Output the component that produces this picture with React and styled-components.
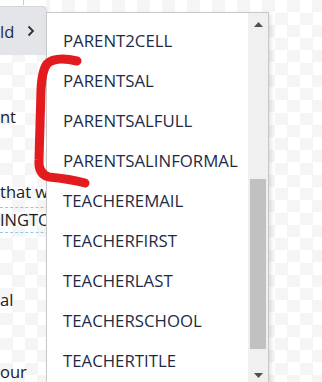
import React from "react";
import styled, { createGlobalStyle } from "styled-components";

const GlobalStyle = createGlobalStyle`
  html, body { margin: 0; padding: 0; }
  body { font-family: "Open Sans", "Noto Sans", sans-serif; }
`;

const Stage = styled.div`
  position: relative;
  width: 322px;
  height: 382px;
  overflow: hidden;
  background-color: #ffffff;
  background-image: conic-gradient(#f5f5f5 25%, transparent 0 50%, #f5f5f5 0 75%, transparent 0);
  background-size: 25px 25px;
`;

const LeftPane = styled.div`
  display: flex;
  flex-direction: column;
  width: 140px;
`;

const TopStrip = styled.div`
  height: 6px;
  width: 46px;
  background: #ffffff;
  display: flex;
`;

const Tick = styled.div`
  margin-left: 23px;
  width: 1px;
  height: 5px;
  background: #c9c9c9;
`;

const SubmenuItem = styled.div`
  box-sizing: border-box;
  width: 47px;
  height: 49px;
  background: #e3e5e8;
  border-top: 1px solid #d3d5d8;
  border-right: 1px solid #d3d5d8;
  border-top-right-radius: 5px;
  display: flex;
  align-items: center;
  gap: 13px;
  font-size: 16.5px;
  color: #1e2a45;
`;

const DocLine = styled.div`
  margin-top: ${(p) => p.$gap}px;
  height: 20px;
  line-height: 20px;
  font-size: 16.5px;
  color: #1c1c1c;
  white-space: nowrap;
`;

const FieldBox = styled.div`
  margin-top: ${(p) => p.$gap}px;
  box-sizing: border-box;
  height: 26px;
  border-top: 1px dashed #8ec9ea;
  border-bottom: 1px dashed #8ec9ea;
  line-height: 24px;
  font-size: 16.5px;
  color: #1c1c1c;
  white-space: nowrap;
`;

const Dropdown = styled.div`
  position: absolute;
  left: 46px;
  top: 12px;
  width: 223px;
  height: 375px;
  box-sizing: border-box;
  background: #ffffff;
  border: 1px solid #c8c8c8;
  box-shadow: 2px 2px 4px rgba(0, 0, 0, 0.12);
  display: flex;
`;

const ItemList = styled.ul`
  list-style: none;
  margin: 0;
  padding: 8px 0 0 0;
  flex: 1;
  overflow: hidden;
`;

const Item = styled.li`
  height: 40px;
  line-height: 40px;
  padding-left: 16px;
  font-size: 16.8px;
  color: #1e2a45;
  white-space: nowrap;
`;

const Scrollbar = styled.div`
  width: 20px;
  background: #f0f0f0;
  display: flex;
  flex-direction: column;
  align-items: center;
`;

const ArrowButton = styled.div`
  height: 22px;
  width: 20px;
  display: flex;
  align-items: center;
  justify-content: center;
`;

const Track = styled.div`
  flex: 1;
  width: 100%;
  display: flex;
  flex-direction: column;
  align-items: center;
`;

const Thumb = styled.div`
  margin-top: ${(p) => p.$offset}px;
  width: 16px;
  height: ${(p) => p.$size}px;
  background: #c1c1c1;
`;

const Annotation = styled.svg`
  position: absolute;
  left: 0;
  top: 0;
  pointer-events: none;
`;

const items = [
  "PARENT2CELL",
  "PARENTSAL",
  "PARENTSALFULL",
  "PARENTSALINFORMAL",
  "TEACHEREMAIL",
  "TEACHERFIRST",
  "TEACHERLAST",
  "TEACHERSCHOOL",
  "TEACHERTITLE",
];

export default function App() {
  return (
    <>
      <GlobalStyle />
      <Stage>
        <LeftPane>
          <TopStrip>
            <Tick />
          </TopStrip>
          <SubmenuItem>
            <span>ld</span>
            <svg width="8" height="12" viewBox="0 0 8 12">
              <polyline points="1.5,1.5 6,6 1.5,10.5" fill="none" stroke="#2a2f3a" strokeWidth="1.8" />
            </svg>
          </SubmenuItem>
          <DocLine $gap={52}>nt</DocLine>
          <DocLine $gap={55}>that will</DocLine>
          <FieldBox $gap={5}>INGTON</FieldBox>
          <DocLine $gap={57}>al</DocLine>
          <DocLine $gap={52}>our</DocLine>
        </LeftPane>

        <Dropdown>
          <ItemList>
            {items.map((t) => (
              <Item key={t}>{t}</Item>
            ))}
          </ItemList>
          <Scrollbar>
            <ArrowButton>
              <svg width="9" height="5" viewBox="0 0 9 5">
                <polygon points="0,5 9,5 4.5,0" fill="#505050" />
              </svg>
            </ArrowButton>
            <Track>
              <Thumb $offset={144} $size={170} />
            </Track>
            <ArrowButton>
              <svg width="9" height="5" viewBox="0 0 9 5">
                <polygon points="0,0 9,0 4.5,5" fill="#505050" />
              </svg>
            </ArrowButton>
          </Scrollbar>
        </Dropdown>

        <Annotation width="322" height="382" viewBox="0 0 322 382">
          <path
            d="M 77 61 Q 55 56 47 64 Q 42 70 41 90 L 39 160 Q 38 174 49 177 Q 70 179 85 183"
            fill="none"
            stroke="#e31b1f"
            strokeWidth="9"
            strokeLinecap="round"
            strokeLinejoin="round"
          />
        </Annotation>
      </Stage>
    </>
  );
}
